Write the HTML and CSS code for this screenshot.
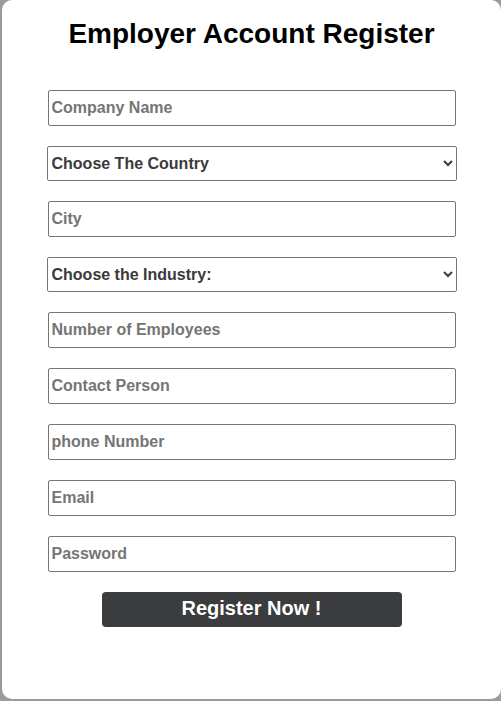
FILE: index.html
```html
<!DOCTYPE html>
<html>
<head>
<meta charset="utf-8">
<link rel="stylesheet" href="styles.css">
</head>
<body>
<div class="card">
  <h1 class="title">Employer Account Register</h1>
  <form class="form">
    <input class="field" type="text" placeholder="Company Name">
    <select class="pick">
      <option>Choose The Country</option>
    </select>
    <input class="field" type="text" placeholder="City">
    <select class="pick">
      <option>Choose the Industry:</option>
    </select>
    <input class="field" type="text" placeholder="Number of Employees">
    <input class="field" type="text" placeholder="Contact Person">
    <input class="field" type="text" placeholder="phone Number">
    <input class="field" type="text" placeholder="Email">
    <input class="field" type="password" placeholder="Password">
    <button class="btn" type="button">Register Now !</button>
  </form>
</div>
</body>
</html>
```

FILE: styles.css
```css
html, body {
  margin: 0;
  padding: 0;
}
body {
  background: #9b9b9b;
  font-family: "Liberation Sans", Arial, sans-serif;
  overflow: hidden;
}
.card {
  margin-left: 2px;
  width: 499px;
  height: 699px;
  background: #fff;
  border-radius: 10px;
  box-sizing: border-box;
  padding-top: 17px;
}
.title {
  margin: 0 0 39px 0;
  text-align: center;
  font-size: 28px;
  font-weight: bold;
  line-height: 34px;
  color: #000;
}
.form {
  display: flex;
  flex-direction: column;
  align-items: center;
  gap: 20px;
}
.field {
  box-sizing: border-box;
  width: 408px;
  height: 36px;
  margin: 0;
  border: 1px solid #767676;
  border-radius: 2px;
  padding: 1px 3px;
  font-family: "Liberation Sans", Arial, sans-serif;
  font-size: 16px;
  font-weight: bold;
  color: #333;
  background: #fff;
}
.field::placeholder {
  color: #757575;
}
.pick {
  box-sizing: border-box;
  width: 410px;
  height: 35px;
  margin: 0;
  border: 1px solid #767676;
  border-radius: 2px;
  font-family: "Liberation Sans", Arial, sans-serif;
  font-size: 16px;
  font-weight: bold;
  color: #3a3a3a;
  background: #fff;
}
.btn {
  width: 300px;
  height: 35px;
  margin: 0;
  border: none;
  border-radius: 4px;
  background: #3b3c3e;
  color: #fff;
  font-family: "Liberation Sans", Arial, sans-serif;
  font-size: 20px;
  font-weight: bold;
  padding: 0 0 2px 0;
}
```
